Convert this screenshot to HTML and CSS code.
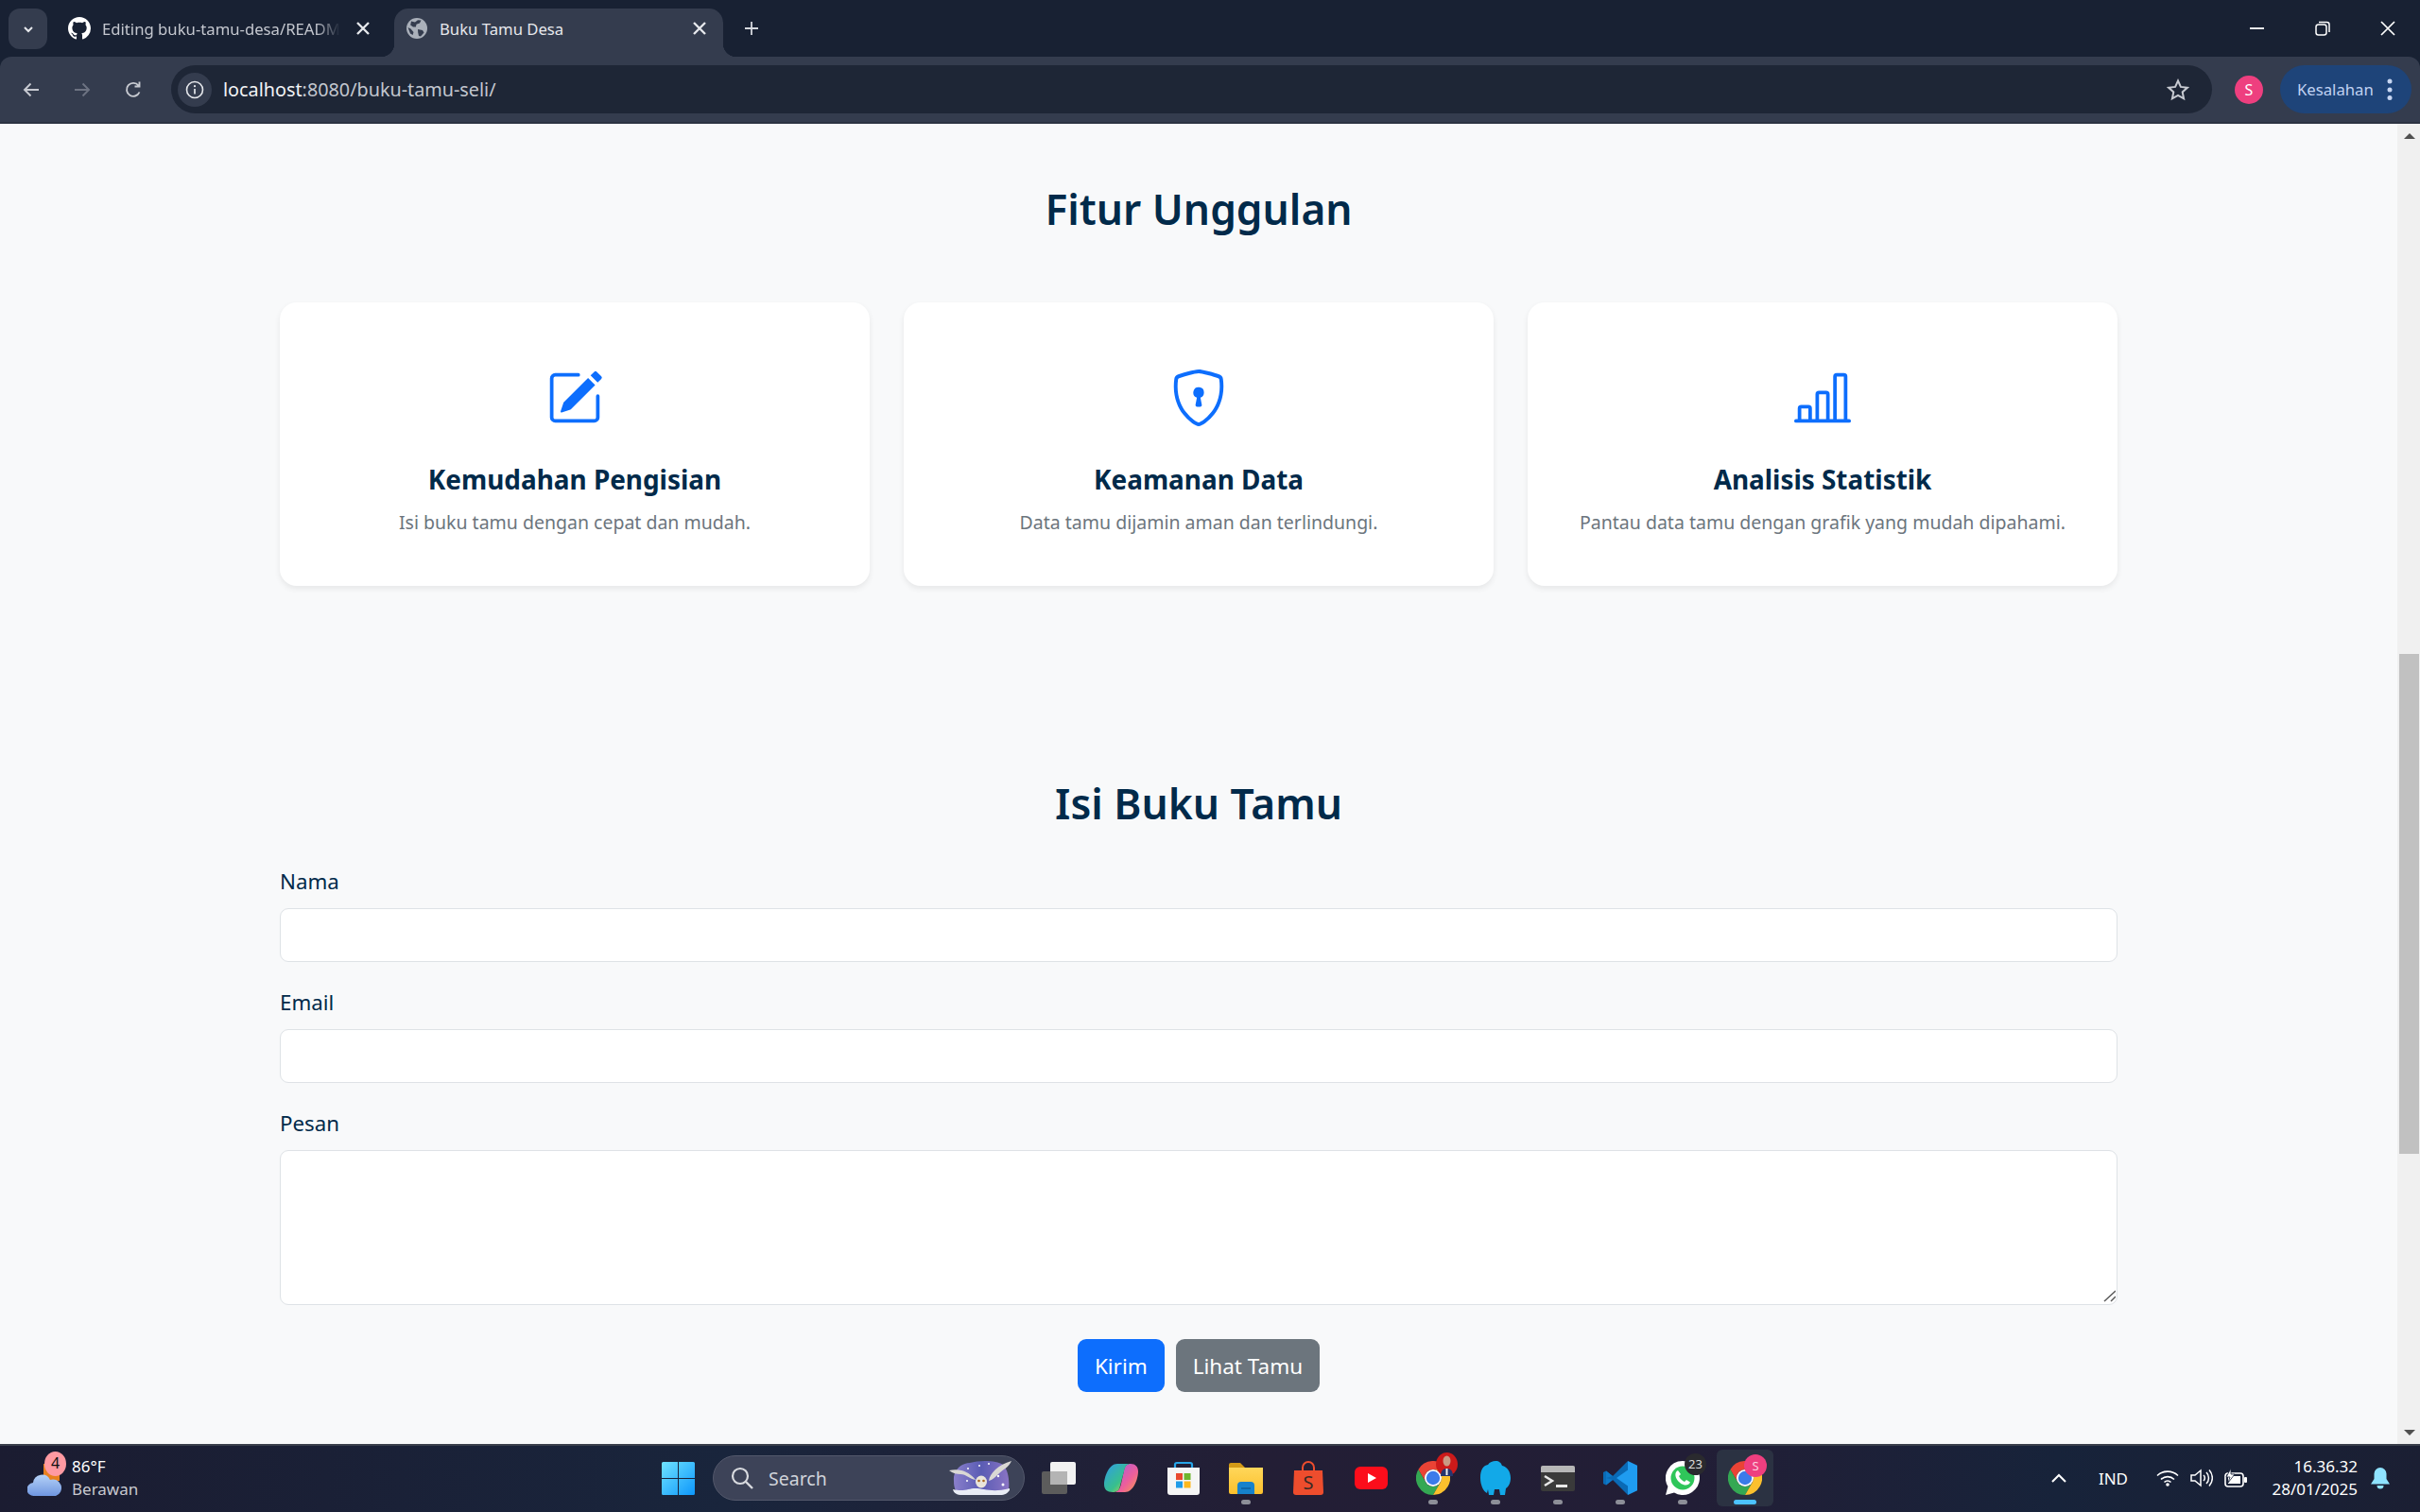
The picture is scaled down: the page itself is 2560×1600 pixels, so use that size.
FILE: index.html
```html
<!DOCTYPE html>
<html lang="en">
<head>
    <meta charset="UTF-8">
    <title>Buku Tamu Desa</title>
    <link rel="stylesheet" href="styles.css">
</head>
<body>
    <svg class="defs" width="0" height="0">
        <symbol id="chrome-logo" viewBox="0 0 36 36">
            <path fill="#ea4335" d="M2.4 9A18 18 0 0 1 33.6 9H18A9 9 0 0 0 10.2 22.5Z"/>
            <path fill="#34a853" d="M2.4 9A18 18 0 0 0 18 36L25.8 22.5A9 9 0 0 1 10.2 22.5Z"/>
            <path fill="#fbc02d" d="M33.6 9A18 18 0 0 1 18 36L25.8 22.5A9 9 0 0 0 18 9H33.6Z"/>
            <circle cx="18" cy="18" r="9" fill="#fff"/>
            <circle cx="18" cy="18" r="7.2" fill="#3b7bea"/>
        </symbol>
    </svg>

    <div class="tab-strip">
        <div class="tab-search">
            <svg width="14" height="14" viewBox="0 0 14 14"><path d="M3 5l4 4 4-4" fill="none" stroke="#e6e8ec" stroke-width="2"/></svg>
        </div>
        <div class="tab">
            <svg class="favicon" viewBox="0 0 16 16"><path fill="#fff" d="M8 0C3.58 0 0 3.58 0 8c0 3.54 2.29 6.53 5.47 7.59.4.07.55-.17.55-.38 0-.19-.01-.82-.01-1.49-2.01.37-2.53-.49-2.69-.94-.09-.23-.48-.94-.82-1.13-.28-.15-.68-.52-.01-.53.63-.01 1.08.58 1.23.82.72 1.21 1.87.87 2.33.66.07-.52.28-.87.51-1.07-1.78-.2-3.64-.89-3.64-3.95 0-.87.31-1.59.82-2.15-.08-.2-.36-1.02.08-2.12 0 0 .67-.21 2.2.82.64-.18 1.32-.27 2-.27.68 0 1.36.09 2 .27 1.53-1.04 2.2-.82 2.2-.82.44 1.1.16 1.92.08 2.12.51.56.82 1.27.82 2.15 0 3.07-1.87 3.75-3.65 3.95.29.25.54.73.54 1.48 0 1.07-.01 1.93-.01 2.2 0 .21.15.46.55.38A8.013 8.013 0 0016 8c0-4.42-3.58-8-8-8z"/></svg>
            <span class="tab-title fade">Editing buku-tamu-desa/READM</span>
            <svg class="tab-close" viewBox="0 0 12 12"><path d="M2 2l8 8M10 2l-8 8" stroke="#e6e8ec" stroke-width="1.6"/></svg>
        </div>
        <div class="tab active">
            <svg class="favicon" viewBox="0 0 22 22">
                <circle cx="11" cy="11" r="11" fill="#aab0ba"/>
                <path fill="#343c4e" d="M5 3.5l4 1 3-2.3 3.5.4-1.5 3-3.5 1.2-.6 2.6L7 9.4 4.2 7.6zM12 12l5 1 1.500 2.600-3.500 4-2-.5-.8-3.500zM1.500 10l3 1.500 3 3.500-.8 3-2.700-1.500z"/>
            </svg>
            <span class="tab-title">Buku Tamu Desa</span>
            <svg class="tab-close" viewBox="0 0 12 12"><path d="M2 2l8 8M10 2l-8 8" stroke="#e6e8ec" stroke-width="1.6"/></svg>
        </div>
        <svg class="new-tab" viewBox="0 0 16 16"><path d="M8 1v14M1 8h14" stroke="#d5d8de" stroke-width="1.8"/></svg>
        <div class="window-controls">
            <svg viewBox="0 0 16 16"><path d="M0 8h15" stroke="#fff" stroke-width="1.8"/></svg>
            <svg viewBox="0 0 16 16"><rect x="1" y="4" width="11" height="11" rx="2.500" fill="none" stroke="#fff" stroke-width="1.500"/><path d="M4 1.500h8.500a2.500 2.500 0 0 1 2.500 2.500V12" fill="none" stroke="#fff" stroke-width="1.500"/></svg>
            <svg viewBox="0 0 16 16"><path d="M1 1l14 14M15 1L1 15" stroke="#fff" stroke-width="1.700"/></svg>
        </div>
    </div>

    <div class="toolbar">
        <div class="nav-btn">
            <svg viewBox="0 0 20 20"><path d="M18 10H3M9.500 3.500L3 10l6.500 6.500" fill="none" stroke="#c7cad1" stroke-width="1.900"/></svg>
        </div>
        <div class="nav-btn">
            <svg viewBox="0 0 20 20"><path d="M2 10h15M10.500 3.500L17 10l-6.500 6.500" fill="none" stroke="#6d7382" stroke-width="1.900"/></svg>
        </div>
        <div class="nav-btn">
            <svg viewBox="0 0 20 20"><path d="M16.500 12.500A7 7 0 1 1 15.500 5.500M16.500 1.500v5h-5" fill="none" stroke="#c7cad1" stroke-width="1.900"/></svg>
        </div>
        <div class="address-bar">
            <div class="site-info">
                <svg viewBox="0 0 20 20"><circle cx="10" cy="10" r="8.500" fill="none" stroke="#e6e8ec" stroke-width="1.600"/><path d="M10 9v5.500" stroke="#e6e8ec" stroke-width="1.700"/><circle cx="10" cy="6.200" r="1.100" fill="#e6e8ec"/></svg>
            </div>
            <span class="url"><span class="url-host">localhost</span>:8080/buku-tamu-seli/</span>
            <svg class="star" viewBox="0 0 24 24"><path d="M12 2.500l2.900 6.400 7 .8-5.200 4.700 1.400 6.900-6.100-3.500-6.100 3.500 1.400-6.900-5.200-4.700 7-.8z" fill="none" stroke="#c7cad1" stroke-width="2"/></svg>
        </div>
        <div class="avatar">S</div>
        <div class="error-pill">
            <span>Kesalahan</span>
            <svg viewBox="0 0 6 24" width="6" height="24"><circle cx="3" cy="3" r="2.500" fill="#c7d6f2"/><circle cx="3" cy="12" r="2.500" fill="#c7d6f2"/><circle cx="3" cy="20.500" r="2.500" fill="#c7d6f2"/></svg>
        </div>
    </div>

    <div class="viewport">
        <main class="page">
            <section class="features">
                <h2 class="section-title">Fitur Unggulan</h2>
                <div class="card-row">
                    <div class="card">
                        <svg class="card-icon" viewBox="0 0 16 16"><path d="M15.502 1.94a.5.5 0 0 1 0 .706L14.459 3.69l-2-2L13.502.646a.5.5 0 0 1 .707 0l1.293 1.293zm-1.750 2.456-2-2L4.939 9.210a.5.5 0 0 0-.121.196l-.805 2.414a.25.25 0 0 0 .316.316l2.414-.805a.5.5 0 0 0 .196-.12l6.813-6.814z"/><path fill-rule="evenodd" d="M1 13.500A1.500 1.500 0 0 0 2.500 15h11a1.500 1.500 0 0 0 1.500-1.500v-6a.5.5 0 0 0-1 0v6a.5.5 0 0 1-.5.5h-11a.5.5 0 0 1-.5-.5v-11a.5.5 0 0 1 .5-.5H9a.5.5 0 0 0 0-1H2.500A1.500 1.500 0 0 0 1 2.500v11z"/></svg>
                        <h5 class="card-title">Kemudahan Pengisian</h5>
                        <p class="card-text">Isi buku tamu dengan cepat dan mudah.</p>
                    </div>
                    <div class="card">
                        <svg class="card-icon" viewBox="0 0 16 16"><path d="M5.338 1.590a61.440 61.440 0 0 0-2.837.856.481.481 0 0 0-.328.390c-.554 4.157.726 7.190 2.253 9.188a10.725 10.725 0 0 0 2.287 2.233c.346.244.652.420.893.533.12.057.218.095.293.118a.55.55 0 0 0 .101.025.615.615 0 0 0 .1-.025c.076-.023.174-.061.294-.118.24-.113.547-.29.893-.533a10.726 10.726 0 0 0 2.287-2.233c1.527-1.997 2.807-5.031 2.253-9.188a.48.48 0 0 0-.328-.39c-.651-.213-1.750-.56-2.837-.855C9.552 1.290 8.531 1.067 8 1.067c-.53 0-1.552.223-2.662.524zM5.072.56C6.157.265 7.310 0 8 0s1.843.265 2.928.56c1.110.3 2.229.655 2.887.87a1.540 1.540 0 0 1 1.044 1.262c.596 4.477-.787 7.795-2.465 9.990a11.775 11.775 0 0 1-2.517 2.453 7.159 7.159 0 0 1-1.048.625c-.28.132-.581.24-.829.24s-.548-.108-.829-.24a7.158 7.158 0 0 1-1.048-.625 11.777 11.777 0 0 1-2.517-2.453C1.928 10.487.545 7.169 1.141 2.692A1.540 1.540 0 0 1 2.185 1.430 62.456 62.456 0 0 1 5.072.56z"/><path d="M9.500 6.500a1.500 1.500 0 0 1-1 1.415l.385 1.990a.5.5 0 0 1-.491.595h-.788a.5.5 0 0 1-.49-.595l.384-1.990a1.500 1.500 0 1 1 2-1.415z"/></svg>
                        <h5 class="card-title">Keamanan Data</h5>
                        <p class="card-text">Data tamu dijamin aman dan terlindungi.</p>
                    </div>
                    <div class="card">
                        <svg class="card-icon" viewBox="0 0 16 16"><path d="M11 2a1 1 0 0 1 1-1h2a1 1 0 0 1 1 1v12h.5a.5.5 0 0 1 0 1H.5a.5.5 0 0 1 0-1H1v-3a1 1 0 0 1 1-1h2a1 1 0 0 1 1 1v3h1V7a1 1 0 0 1 1-1h2a1 1 0 0 1 1 1v7h1V2zm1 12h2V2h-2v12zm-3 0V7H7v7h2zm-5 0v-3H2v3h2z"/></svg>
                        <h5 class="card-title">Analisis Statistik</h5>
                        <p class="card-text">Pantau data tamu dengan grafik yang mudah dipahami.</p>
                    </div>
                </div>
            </section>

            <section class="guest-form">
                <h2 class="section-title form-title">Isi Buku Tamu</h2>
                <form>
                    <div class="field">
                        <label for="nama">Nama</label>
                        <input type="text" id="nama" class="form-control">
                    </div>
                    <div class="field">
                        <label for="email">Email</label>
                        <input type="email" id="email" class="form-control">
                    </div>
                    <div class="field message-field">
                        <label for="pesan">Pesan</label>
                        <textarea id="pesan" class="form-control"></textarea>
                        <svg class="resize-grip" width="16" height="16" viewBox="0 0 16 16"><path d="M4 14L16 3M11 14l5-5" stroke="#5a5a5a" stroke-width="1.500" fill="none"/></svg>
                    </div>
                    <div class="form-actions">
                        <button type="button" class="btn btn-primary">Kirim</button>
                        <button type="button" class="btn btn-secondary">Lihat Tamu</button>
                    </div>
                </form>
            </section>
        </main>

        <div class="scrollbar">
            <svg class="scroll-arrow" viewBox="0 0 12 6"><path d="M6 0l6 6H0z" fill="#505050"/></svg>
            <div class="scroll-thumb"></div>
            <svg class="scroll-arrow bottom" viewBox="0 0 12 6"><path d="M0 0h12L6 6z" fill="#505050"/></svg>
        </div>
    </div>

    <footer class="taskbar">
        <div class="weather">
            <div class="weather-icon">
                <svg viewBox="0 0 36 42" width="36" height="42">
                    <defs><linearGradient id="cloud" x1="0" y1="0" x2="0" y2="1"><stop offset="0" stop-color="#b5d2f7"/><stop offset="1" stop-color="#6f96e0"/></linearGradient></defs>
                    <rect x="17" y="6" width="17" height="18" fill="#e8801f"/>
                    <path fill="url(#cloud)" d="M7 40a7 7 0 0 1-1-14 9.500 9.500 0 0 1 18-3 8.500 8.500 0 0 1 6 17z"/>
                </svg>
                <span class="weather-badge">4</span>
            </div>
            <div class="weather-text">
                <div class="weather-temp">86°F</div>
                <div class="weather-desc">Berawan</div>
            </div>
        </div>

        <div class="tb-app">
            <svg width="35" height="35" viewBox="0 0 35 35">
                <defs><linearGradient id="win" x1="0" y1="0" x2="1" y2="1"><stop offset="0" stop-color="#6fe3ff"/><stop offset="1" stop-color="#0d97fb"/></linearGradient></defs>
                <path fill="url(#win)" d="M1.500 0H17v17H0V1.500A1.500 1.500 0 0 1 1.500 0zM18 0h15.500A1.500 1.500 0 0 1 35 1.500V17H18zM0 18h17v17H1.500A1.500 1.500 0 0 1 0 33.500zM18 18h17v15.500a1.500 1.500 0 0 1-1.500 1.500H18z"/>
            </svg>
        </div>

        <div class="search-box">
            <svg width="24" height="24" viewBox="0 0 24 24"><circle cx="10" cy="10" r="8" fill="none" stroke="#d8dadf" stroke-width="2.200"/><path d="M16 16l7 7" stroke="#d8dadf" stroke-width="2.400"/></svg>
            <span class="search-label">Search</span>
            <svg class="search-art" width="70" height="38" viewBox="0 0 70 38">
                <defs><linearGradient id="dusk" x1="0" y1="0" x2="1" y2="0"><stop offset="0" stop-color="#8a7fcb"/><stop offset=".5" stop-color="#5a5cb4"/><stop offset="1" stop-color="#8a74c4"/></linearGradient></defs>
                <path fill="url(#dusk)" d="M5 22C4 12 12 3 22 3c10-3 28-3 35 2 6 6 7 18 6 26-1 4-5 5-10 5H14C7 36 5 30 5 22z"/>
                <path fill="#e9edf6" d="M4 31c12 3 16-1 24-1s18 5 36 0v2c-2 3-5 5-10 5H14c-6 0-9-2-10-6z"/>
                <g fill="#fff"><circle cx="20" cy="9" r="1"/><circle cx="32" cy="6" r="1"/><circle cx="42" cy="4" r="1"/><circle cx="52" cy="17" r="1.200"/><circle cx="57" cy="26" r="1.500"/><circle cx="19" cy="22" r="1"/></g>
                <path fill="#d9d8d4" d="M0 11c10-2 20 0 28 10-6-1-10-6-16-6-4 0-8-1-12-4zM66 1c-3 7-8 8-14 14-3 3-6 6-10 7 1-8 10-17 24-21z"/>
                <ellipse cx="34" cy="23" rx="6" ry="6.500" fill="#e9e5da"/>
                <circle cx="31.500" cy="22" r="1.300" fill="#a8661f"/>
                <circle cx="36.500" cy="22" r="1.300" fill="#a8661f"/>
            </svg>
        </div>

        <div class="tb-apps">
            <div class="tb-app">
                <svg width="36" height="34" viewBox="0 0 36 34"><rect x="0" y="10" width="27" height="24" rx="2" fill="#5c5c5c"/><rect x="9" y="0" width="27" height="24" rx="2" fill="#f2f2f2"/><path d="M9 10h18v14H9z" fill="#b4b4b4"/></svg>
            </div>
            <div class="tb-app">
                <svg width="36" height="32" viewBox="0 0 36 32">
                    <defs>
                        <linearGradient id="cop-a" x1="0" y1="0" x2="1" y2="1"><stop offset="0" stop-color="#2f9be8"/><stop offset=".6" stop-color="#38c08c"/><stop offset="1" stop-color="#e8d23a"/></linearGradient>
                        <linearGradient id="cop-b" x1="0" y1="0" x2="1" y2="1"><stop offset="0" stop-color="#a75be0"/><stop offset=".6" stop-color="#ee5f9a"/><stop offset="1" stop-color="#f5a04a"/></linearGradient>
                    </defs>
                    <path fill="url(#cop-b)" d="M22 31H11c5-1 6-5 7-9l3-14c1-5 3-7 7-7 5 0 8 3 8 8 0 8-5 22-14 22z"/>
                    <path fill="url(#cop-a)" d="M14 1h14c-5 0-6 4-7 8l-4 15c-1 5-3 7-8 7-6 0-9-3-9-8C0 15 5 1 14 1z"/>
                </svg>
            </div>
            <div class="tb-app">
                <svg width="36" height="36" viewBox="0 0 36 36">
                    <path d="M9 11V4a2 2 0 0 1 2-2h14a2 2 0 0 1 2 2v7" fill="none" stroke="#27a5e8" stroke-width="2.200"/>
                    <path fill="#f5f5f5" d="M1 7h34v26a3 3 0 0 1-3 3H4a3 3 0 0 1-3-3z"/>
                    <rect x="10" y="13" width="7" height="7" fill="#e8492e"/><rect x="18.500" y="13" width="7" height="7" fill="#6fb52e"/>
                    <rect x="10" y="21.500" width="7" height="7" fill="#1f9be8"/><rect x="18.500" y="21.500" width="7" height="7" fill="#fdb81e"/>
                </svg>
            </div>
            <div class="tb-app has-dot">
                <svg width="36" height="34" viewBox="0 0 36 34">
                    <defs><linearGradient id="fold" x1="0" y1="0" x2="0" y2="1"><stop offset="0" stop-color="#ffd75a"/><stop offset="1" stop-color="#fbc02d"/></linearGradient></defs>
                    <path fill="#d39a16" d="M0 3a2 2 0 0 1 2-2h10l5 5H0z"/>
                    <path fill="url(#fold)" d="M0 6h36v26a2 2 0 0 1-2 2H2a2 2 0 0 1-2-2z"/>
                    <path fill="#1682cc" d="M9 34V25a4 4 0 0 1 4-4h10a4 4 0 0 1 4 4v9z"/>
                    <path d="M13 28h10" stroke="#0b5e9c" stroke-width="1.500"/>
                </svg>
            </div>
            <div class="tb-app">
                <svg width="32" height="36" viewBox="0 0 32 36">
                    <path d="M10 10V7a6 6 0 0 1 12 0v3" fill="none" stroke="#ee4d2d" stroke-width="2"/>
                    <path fill="#ee4d2d" d="M1 10h30l1 23a3 3 0 0 1-3 3H3a3 3 0 0 1-3-3z"/>
                    <text x="16" y="30" class="shopee-s">S</text>
                </svg>
            </div>
            <div class="tb-app">
                <svg width="35" height="24" viewBox="0 0 35 24"><rect width="35" height="24" rx="6" fill="#fc0d1b"/><path d="M14 7l9 5-9 5z" fill="#fff"/></svg>
            </div>
            <div class="tb-app has-dot">
                <svg width="36" height="36"><use href="#chrome-logo"/></svg>
                <span class="app-badge badge-photo">
                    <svg width="23" height="25" viewBox="0 0 23 25"><ellipse cx="11.500" cy="12.500" rx="11.500" ry="12.500" fill="#cc1a1a"/><ellipse cx="11.500" cy="9" rx="4" ry="5.500" fill="#c99a84"/><path d="M5 25c0-6 3-8 6.500-8s6.500 2 6.500 8z" fill="#26356e"/><path d="M10.500 17h2v7h-2z" fill="#eee"/></svg>
                </span>
            </div>
            <div class="tb-app has-dot">
                <svg width="34" height="36" viewBox="0 0 34 36"><path fill="#12a9e8" d="M17 0c4 0 6 2 7 5 5 1 9 6 9 13 0 5-2 9-5 11l-1 7h-5l-1-6h-5l-1 6H10l-1-6-1 4c-4-2-7-9-7-16C1 9 4 5 9 4c2-3 5-4 8-4z"/></svg>
            </div>
            <div class="tb-app has-dot">
                <svg width="36" height="27" viewBox="0 0 36 27"><rect width="36" height="27" rx="2" fill="#3a3a3a"/><path d="M0 2a2 2 0 0 1 2-2h32a2 2 0 0 1 2 2v5H0z" fill="#b7b7b7"/><path d="M4 11l8 5-8 5" fill="none" stroke="#e8e8e8" stroke-width="2.500"/><rect x="16" y="20" width="12" height="3" fill="#e8e8e8"/></svg>
            </div>
            <div class="tb-app has-dot">
                <svg width="36" height="36" viewBox="0 0 36 36"><path fill="#0a6fbd" d="M26 0L10 16 3 10.500 0 12v12l3 1.500L10 20l16 16z" opacity=".95"/><path fill="#1f9cf0" d="M26 0l10 4.800v26.400L26 36zM26 9.500L14 18l12 8.500z"/><path fill="#0d78c8" d="M3 10.500l7 5.500-7 2zM3 25.500L10 20l-7-2z"/></svg>
            </div>
            <div class="tb-app has-dot">
                <svg width="36" height="36" viewBox="0 0 36 36"><path fill="#fff" d="M18 0a18 18 0 1 1-9 33.600L0 36l2.400-9A18 18 0 0 1 18 0z"/><circle cx="18" cy="18" r="12.500" fill="#2fc65a"/><path fill="#fff" d="M13 10c-2 1-3 3-2.500 6 1 4.500 5 8.500 9.500 9.500 3 .5 5-1 6-3l-4-2.500-2 2c-2.500-1-5-3.500-6-6l2-2z"/></svg>
                <span class="app-badge badge-count">23</span>
            </div>
            <div class="tb-app active has-dot">
                <svg width="36" height="36"><use href="#chrome-logo"/></svg>
                <span class="app-badge badge-profile">S</span>
            </div>
        </div>

        <div class="tray">
            <svg class="tray-caret" width="16" height="10" viewBox="0 0 16 10"><path d="M1 9l7-7 7 7" fill="none" stroke="#fff" stroke-width="2"/></svg>
            <span class="tray-lang">IND</span>
            <svg class="tray-wifi" width="24" height="18" viewBox="0 0 24 18"><path d="M1 6.500a16 16 0 0 1 22 0M5 10.500a10 10 0 0 1 14 0M8.500 13.500a5 5 0 0 1 7 0" fill="none" stroke="#fff" stroke-width="1.600"/><circle cx="12" cy="16" r="1.800" fill="#fff"/></svg>
            <svg class="tray-sound" width="24" height="20" viewBox="0 0 24 20"><path d="M1 7h4l6-5v16l-6-5H1z" fill="none" stroke="#fff" stroke-width="1.500"/><path d="M14 7a4 4 0 0 1 0 6M17 4a8.500 8.500 0 0 1 0 12M20 1.500a12.500 12.500 0 0 1 0 17" fill="none" stroke="#fff" stroke-width="1.500"/></svg>
            <svg class="tray-battery" width="24" height="20" viewBox="0 0 24 20"><rect x="1" y="5" width="19" height="14" rx="3" fill="none" stroke="#fff" stroke-width="1.600"/><rect x="4" y="8" width="13" height="8" fill="#fff"/><rect x="21" y="9" width="3" height="6" rx="1" fill="#fff"/><path d="M7 0L2 9h4l-2 6 7-9H7z" fill="#fff" stroke="#19233a" stroke-width=".8"/></svg>
            <div class="clock">
                <div>16.36.32</div>
                <div>28/01/2025</div>
            </div>
            <svg class="tray-bell" width="20" height="23" viewBox="0 0 20 23"><path fill="#8fe3ff" d="M10 0a6.500 6.500 0 0 1 6.500 6.500V12l3.500 5.500H0L3.500 12V6.500A6.500 6.500 0 0 1 10 0z"/><path fill="#8fe3ff" d="M6.500 19h7a3.500 3.500 0 0 1-7 0z"/></svg>
        </div>
    </footer>
</body>
</html>
```

FILE: styles.css
```css
* {
    box-sizing: border-box;
}
html, body {
    height: 100%;
}
body {
    margin: 0;
    display: flex;
    flex-direction: column;
    height: 1600px;
    overflow: hidden;
    font-family: "Noto Sans", sans-serif;
    background: #182133;
}
.defs {
    display: block;
    height: 0;
}

/* browser window */
.tab-strip {
    height: 60px;
    flex: none;
    display: flex;
    align-items: flex-end;
    padding-left: 9px;
    background: #182133;
}
.tab-search {
    align-self: flex-start;
    margin-top: 9px;
    width: 41px;
    height: 43px;
    border-radius: 12px;
    background: #343c4e;
    display: flex;
    align-items: center;
    justify-content: center;
}
.tab {
    width: 348px;
    height: 51px;
    padding: 0 5px 9px 22px;
    display: flex;
    align-items: center;
    color: #c4c7cf;
    font-size: 16.7px;
    border-radius: 15px 15px 0 0;
    position: relative;
}
.tab.active {
    margin-left: 19px;
    padding: 0 16px 9px 13px;
    background: #343c4e;
    color: #e6e8ec;
}
.tab.active::before,
.tab.active::after {
    content: "";
    position: absolute;
    bottom: 0;
    width: 14px;
    height: 14px;
}
.tab.active::before {
    left: -14px;
    background: radial-gradient(circle at 0 0, transparent 14px, #343c4e 14.5px);
}
.tab.active::after {
    right: -14px;
    background: radial-gradient(circle at 100% 0, transparent 14px, #343c4e 14.5px);
}
.favicon {
    width: 24px;
    height: 24px;
    flex: none;
}
.tab.active .favicon {
    width: 22px;
    height: 22px;
}
.tab-title {
    margin-left: 12px;
    flex: 1;
    white-space: nowrap;
}
.tab.active .tab-title {
    margin-left: 13px;
}
.tab-title.fade {
    -webkit-mask-image: linear-gradient(90deg, #000 88%, transparent 98%);
    mask-image: linear-gradient(90deg, #000 88%, transparent 98%);
}
.tab-close {
    width: 18px;
    height: 18px;
    flex: none;
    margin-left: 10px;
}
.new-tab {
    width: 16px;
    height: 16px;
    margin: 0 0 22px 22px;
}
.window-controls {
    margin-left: auto;
    align-self: flex-start;
    display: flex;
    gap: 53px;
    padding: 22px 26px 0 0;
}
.window-controls svg {
    width: 16px;
    height: 16px;
}

.toolbar {
    height: 71px;
    flex: none;
    display: flex;
    align-items: center;
    padding: 0 9px 0 6px;
    background: #343c4e;
    border-bottom: 2px solid #2c3342;
    border-radius: 12px 12px 0 0;
}
.nav-btn {
    width: 54px;
    display: flex;
    justify-content: center;
}
.nav-btn svg {
    width: 20px;
    height: 20px;
}
.address-bar {
    flex: 1;
    height: 51px;
    margin-left: 13px;
    padding: 0 24px 0 7px;
    display: flex;
    align-items: center;
    background: #1e2636;
    border-radius: 26px;
}
.site-info {
    width: 36px;
    height: 36px;
    border-radius: 50%;
    background: #343c4e;
    display: flex;
    align-items: center;
    justify-content: center;
}
.site-info svg {
    width: 20px;
    height: 20px;
}
.url {
    margin-left: 12px;
    font-size: 19.8px;
    color: #c3c7cf;
}
.url-host {
    color: #f2f3f5;
}
.star {
    width: 24px;
    height: 24px;
    margin-left: auto;
}
.avatar {
    width: 30px;
    height: 30px;
    margin-left: 24px;
    border-radius: 50%;
    background: #ee3f7f;
    color: #fff;
    font-size: 16px;
    line-height: 30px;
    text-align: center;
}
.error-pill {
    width: 139px;
    height: 51px;
    margin-left: 18px;
    padding: 0 20px 0 18px;
    display: flex;
    align-items: center;
    justify-content: space-between;
    background: #1e4479;
    border-radius: 26px;
    color: #c0d2f2;
    font-size: 16.7px;
}

/* page */
.viewport {
    flex: 1;
    min-height: 0;
    display: flex;
    background: #f8f9fa;
}
.page {
    flex: 1;
    padding: 61px 296px 0;
    overflow: hidden;
    color: #012a4a;
}
.section-title {
    margin: 0 0 70px;
    font-size: 44.3px;
    font-weight: 600;
    line-height: 58px;
    text-align: center;
}
.card-row {
    display: grid;
    grid-template-columns: repeat(3, 1fr);
    gap: 36px;
}
.card {
    height: 300px;
    padding-top: 71px;
    background: #fff;
    border-radius: 18px;
    box-shadow: 0 3px 6px rgba(0,0,0,0.075);
    text-align: center;
}
.card-icon {
    display: block;
    width: 60px;
    height: 60px;
    margin: 0 auto;
    fill: #0d6efd;
}
.card-title {
    margin: 38px 0 0;
    font-size: 27.9px;
    font-weight: 700;
    line-height: 36px;
}
.card-text {
    margin: 12px 0 0;
    font-size: 19.5px;
    line-height: 32px;
    color: #6c757d;
}
.guest-form {
    margin-top: 201px;
}
.form-title {
    margin-bottom: 35px;
}
.field {
    margin-bottom: 24px;
}
.field label {
    display: block;
    height: 36px;
    margin-bottom: 11px;
    font-size: 22.3px;
    line-height: 38px;
}
.form-control {
    display: block;
    width: 100%;
    height: 57px;
    padding: 9px 18px;
    background: #fff;
    border: 1.5px solid #dee2e6;
    border-radius: 9px;
    font: inherit;
}
textarea.form-control {
    height: 164px;
    resize: none;
}
.message-field {
    position: relative;
}
.resize-grip {
    position: absolute;
    right: 2px;
    bottom: 2px;
}
.form-actions {
    margin-top: 36px;
    display: flex;
    justify-content: center;
    gap: 12px;
}
.btn {
    height: 56px;
    padding: 0 18px;
    border: 0;
    border-radius: 9px;
    color: #fff;
    font-family: inherit;
    font-size: 22.5px;
}
.btn-primary {
    background: #0d6efd;
}
.btn-secondary {
    background: #6c757d;
}

.scrollbar {
    width: 24px;
    flex: none;
    padding: 10px 1px 9px 2px;
    display: flex;
    flex-direction: column;
    background: #f0f0f0;
}
.scroll-arrow {
    display: block;
    width: 12px;
    height: 6px;
    flex: none;
    margin-left: 5px;
}
.scroll-thumb {
    height: 529px;
    margin-top: 545px;
    background: #c1c1c1;
}
.scroll-arrow.bottom {
    margin-top: auto;
}

/* taskbar */
.taskbar {
    height: 72px;
    flex: none;
    display: flex;
    align-items: center;
    padding-bottom: 2px;
    border-top: 2px solid #3a3f4b;
    background: linear-gradient(90deg, #1b1c31 0%, #19253c 30%, #231e35 52%, #221e36 70%, #17233a 85%, #1b1f33 100%);
    color: #fff;
}
.weather {
    width: 684px;
    flex: none;
    padding-left: 29px;
    display: flex;
    align-items: center;
    gap: 11px;
}
.weather-icon {
    position: relative;
    width: 36px;
    height: 42px;
}
.weather-badge {
    position: absolute;
    left: 18px;
    top: -7px;
    width: 23px;
    height: 26px;
    border-radius: 50%;
    background: #ff9aa2;
    color: #111;
    font-size: 16px;
    line-height: 25px;
    text-align: center;
}
.weather-temp,
.weather-desc {
    font-size: 17px;
    line-height: 24px;
}
.weather-desc {
    color: #c8c9cf;
}
.tb-apps {
    display: flex;
    margin-left: 3px;
}
.tb-app {
    position: relative;
    width: 66px;
    height: 60px;
    display: flex;
    align-items: center;
    justify-content: center;
    border-radius: 6px;
}
.tb-app.active {
    width: 60px;
    margin: 0 3px;
    background: #2b3242;
}
.tb-app.has-dot::after {
    content: "";
    position: absolute;
    left: 28px;
    bottom: 2px;
    width: 10px;
    height: 5px;
    border-radius: 3px;
    background: #8d8f98;
}
.tb-app.active::after {
    left: 18px;
    width: 24px;
    background: #4cc2ff;
}
.search-box {
    width: 330px;
    height: 48px;
    margin-left: 4px;
    padding: 0 9px 0 18px;
    display: flex;
    align-items: center;
    background: #3d4358;
    border: 1.5px solid #53586b;
    border-radius: 24px;
}
.search-label {
    margin-left: 16px;
    font-size: 19.5px;
    color: #d0d3da;
}
.search-art {
    margin-left: auto;
}
.shopee-s {
    font-size: 20px;
    fill: #3a2a25;
    text-anchor: middle;
}
.app-badge {
    position: absolute;
}
.badge-photo {
    left: 36px;
    top: 3px;
    width: 23px;
    height: 25px;
}
.badge-count {
    left: 35px;
    top: 4px;
    width: 23px;
    height: 23px;
    border-radius: 50%;
    background: #2a2a2e;
    font-size: 13px;
    line-height: 23px;
    text-align: center;
    color: #ddd;
}
.badge-profile {
    left: 29px;
    top: 5px;
    width: 24px;
    height: 24px;
    border-radius: 50%;
    background: #ee3f7f;
    font-size: 13px;
    line-height: 24px;
    text-align: center;
    color: #fbd0df;
}
.tray {
    margin-left: auto;
    padding-right: 32px;
    display: flex;
    align-items: center;
}
.tray-lang {
    margin-left: 34px;
    font-size: 17px;
}
.tray-wifi {
    margin-left: 30px;
}
.tray-sound {
    margin-left: 12px;
}
.tray-battery {
    margin-left: 12px;
}
.clock {
    width: 117px;
    font-size: 17px;
    line-height: 24px;
    text-align: right;
}
.tray-bell {
    margin-left: 14px;
}
```
